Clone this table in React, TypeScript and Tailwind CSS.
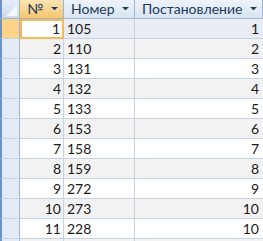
import React from "react";

const rows: [number, number, number][] = [
  [1, 105, 1],
  [2, 110, 2],
  [3, 131, 3],
  [4, 132, 4],
  [5, 133, 5],
  [6, 153, 6],
  [7, 158, 7],
  [8, 159, 8],
  [9, 272, 9],
  [10, 273, 10],
  [11, 228, 10],
];

const Arrow = () => (
  <svg width="7" height="5" viewBox="0 0 7 5" className="shrink-0">
    <path d="M0 1h7L3.5 4.5z" fill="#fff" opacity="0.8" />
    <path d="M0 0h7L3.5 3.5z" fill="#2c3e55" />
  </svg>
);

const HeaderCell = ({
  label,
  width,
  active,
}: {
  label: string;
  width: string;
  active?: boolean;
}) => (
  <div
    className={`${width} h-full flex items-center justify-between pl-[7px] pr-[5px] border-r border-[#9eb6ce] ${
      active
        ? "bg-gradient-to-b from-[#fbe3b2] to-[#f6c66c]"
        : "bg-gradient-to-b from-[#eef3fa] to-[#d8e4f3]"
    }`}
  >
    <span className="text-[#1e395b]">{label}</span>
    <Arrow />
  </div>
);

export default function App() {
  return (
    <div
      className="w-[263px] h-[241px] overflow-hidden bg-white text-[14px] leading-none"
      style={{ fontFamily: "Lato, 'Open Sans', sans-serif" }}
    >
      {/* header */}
      <div className="flex h-[19px] border-b border-[#9eb6ce]">
        <div className="w-[20px] h-full shrink-0 border-l-2 border-[#6593cf] border-r border-r-[#9eb6ce] bg-gradient-to-b from-[#e6eef9] to-[#c9daf0] relative">
          <div className="absolute right-[2px] bottom-[2px] w-0 h-0 border-l-[11px] border-l-transparent border-b-[11px] border-b-[#f4f7fb]" />
        </div>
        <HeaderCell label="№" width="w-[44px] shrink-0" active />
        <HeaderCell label="Номер" width="w-[71px] shrink-0" />
        <HeaderCell label="Постановление" width="flex-1" />
      </div>

      {/* rows */}
      {rows.map(([n, num, post], i) => {
        const sel = i === 0;
        const bg = sel ? "bg-[#e9edf3]" : i % 2 === 1 ? "bg-[#f2f2f2]" : "bg-white";
        return (
          <div key={n} className="flex h-[20px] text-[#1a1a1a]">
            <div
              className={`w-[20px] shrink-0 border-l-2 border-[#6593cf] border-r border-r-[#9eb6ce] border-b border-b-[#c5d3e6] ${
                sel ? "bg-[#fdd38a]" : "bg-[#e3ebf7]"
              }`}
            />
            <div
              className={`w-[44px] shrink-0 flex items-center justify-end pr-[2px] ${
                sel
                  ? "bg-white border-2 border-[#f7b75b]"
                  : `${bg} border-r border-b border-[#c5d3e6]`
              }`}
            >
              {n}
            </div>
            <div className={`w-[71px] shrink-0 flex items-center pl-[3px] border-r border-b border-[#c5d3e6] ${bg}`}>
              {num}
            </div>
            <div className={`flex-1 flex items-center justify-end pr-[4px] border-b border-[#c5d3e6] ${bg}`}>
              {post}
            </div>
          </div>
        );
      })}
      <div className="flex h-[20px]">
        <div className="w-[20px] shrink-0 border-l-2 border-[#6593cf] border-r border-r-[#9eb6ce] bg-[#e3ebf7]" />
        <div className="w-[44px] shrink-0 border-r border-[#c5d3e6] bg-[#f2f2f2]" />
        <div className="w-[71px] shrink-0 border-r border-[#c5d3e6] bg-[#f2f2f2]" />
        <div className="flex-1 bg-[#f2f2f2]" />
      </div>
    </div>
  );
}
